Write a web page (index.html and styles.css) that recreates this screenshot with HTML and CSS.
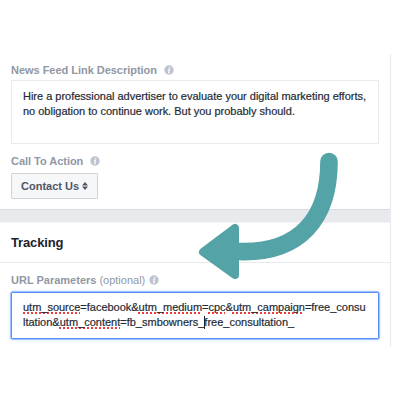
FILE: index.html
```html
<!DOCTYPE html>
<html lang="en">
<head>
<meta charset="utf-8">
<title>Ad settings</title>
<link rel="stylesheet" href="styles.css">
</head>
<body>
<main class="panel">
  <section class="card link-card">
    <div class="label"><span class="t-news">News Feed Link Description</span><svg class="info" viewBox="0 0 10 10"><circle cx="5" cy="5" r="4.7"/><path d="M5.700 2v1.200M4.200 4.400h1.100L4.700 7.600h1"/></svg></div>
    <div class="textarea"><div class="d1">Hire a professional advertiser to evaluate your digital marketing efforts,</div><div class="d2">no obligation to continue work. But you probably should.</div></div>
    <div class="label cta"><span class="t-cta">Call To Action</span><svg class="info" viewBox="0 0 10 10"><circle cx="5" cy="5" r="4.7"/><path d="M5.700 2v1.200M4.200 4.400h1.100L4.700 7.600h1"/></svg></div>
    <button class="button"><span>Contact Us</span><svg class="sort" viewBox="0 0 6 8"><path d="M3 0L6 3.400H0zM3 8L0 4.600h6z"/></svg></button>
  </section>
  <section class="card tracking-card">
    <h2 class="heading">Tracking</h2>
    <div class="tracking-body">
      <div class="label"><span class="t-url">URL Parameters</span><span class="optional">(optional)</span><svg class="info" viewBox="0 0 10 10"><circle cx="5" cy="5" r="4.7"/><path d="M5.700 2v1.200M4.200 4.400h1.100L4.700 7.600h1"/></svg></div>
      <div class="textarea focused"><div class="u1"><span class="sp">utm_source</span>=facebook&amp;<span class="sp">utm_medium</span>=<span class="sp">cpc</span>&amp;<span class="sp">utm_campaign</span>=free_consu</div><div class="u2">ltation&amp;<span class="sp">utm_content</span>=fb_smbowners_<span class="caret"></span>free_consultation_</div></div>
    </div>
  </section>
</main>
<svg class="arrow" viewBox="0 0 400 400"><path class="shaft" d="M329 161.500C329 218 300 254 238 251.500"/><path class="head" d="M203 252L235 228V275Z"/></svg>
</body>
</html>
```
FILE: styles.css
```css
* { box-sizing: border-box; }
body { margin: 0; padding-top: 54px; width: 400px; height: 400px; overflow: hidden; background: #fff; font-family: "Liberation Sans", Arial, sans-serif; font-size: 11px; color: #242a35; }
.panel { width: 391px; height: 293px; background: #e9eaed; display: flex; flex-direction: column; gap: 12px; }
.card { background: #fff; border-right: 1px solid #e8e9ec; }
.link-card { height: 156px; padding: 9px 11px 0; border-bottom: 1px solid #d9dbe0; border-radius: 0 0 2px 0; }
.label { display: flex; align-items: center; height: 14px; color: #9197a3; font-weight: bold; white-space: nowrap; }
.t-news { letter-spacing: -.03px; }
.t-cta { letter-spacing: -.03px; }
.info { width: 10px; height: 10px; margin-left: 7px; fill: #bdc3cf; }
.info path { fill: none; stroke: #fff; stroke-width: 1.2; }
.textarea { width: 368px; height: 64px; margin-top: 3px; padding: 8px 11px; border: 1px solid #e9eaeb; line-height: 15px; white-space: nowrap; -webkit-text-stroke: .2px; }
.d1, .d2, .u1 { letter-spacing: -.014px; }
.cta { margin-top: 10px; }
.button { display: flex; align-items: center; gap: 3px; width: 87px; height: 26px; margin-top: 5px; padding: 0 0 1px 9px; border: 1px solid #d1d3d8; border-radius: 1px; background: #f6f7f8; color: #4e5665; font: bold 11px "Liberation Sans", Arial, sans-serif; white-space: nowrap; }
.sort { flex: none; width: 6px; height: 8px; fill: #4e5665; }
.tracking-card { height: 125px; border-top: 1px solid #f2f3f4; }
.heading { display: flex; align-items: center; height: 40px; margin: 0; padding-left: 11px; border-bottom: 1px solid #e9eaed; font-size: 13px; letter-spacing: -.15px; color: #1d2129; }
.tracking-body { padding: 10px 11px 0; }
.optional { font-weight: normal; margin-left: 3px; }
.tracking-body .info { margin-left: 4px; }
.focused { height: 47px; margin-top: 5px; padding-top: 7px; border: 1px solid #5890ff; border-radius: 1px; box-shadow: 0 0 0 .5px #6e9fff, 0 0 3px #8db4ff; }
.sp { text-decoration: underline dotted #f03c3c 1.500px; text-underline-offset: 0.500px; text-decoration-skip-ink: none; }
.caret { display: inline-block; width: 1px; height: 13px; margin-right: -1px; vertical-align: -3px; background: #222; }
.arrow { position: absolute; left: 0; top: 0; width: 400px; height: 400px; }
.shaft { fill: none; stroke: #54a3a6; stroke-width: 17.600; stroke-linecap: round; }
.head { fill: #54a3a6; stroke: #54a3a6; stroke-width: 8; stroke-linejoin: round; }
```
